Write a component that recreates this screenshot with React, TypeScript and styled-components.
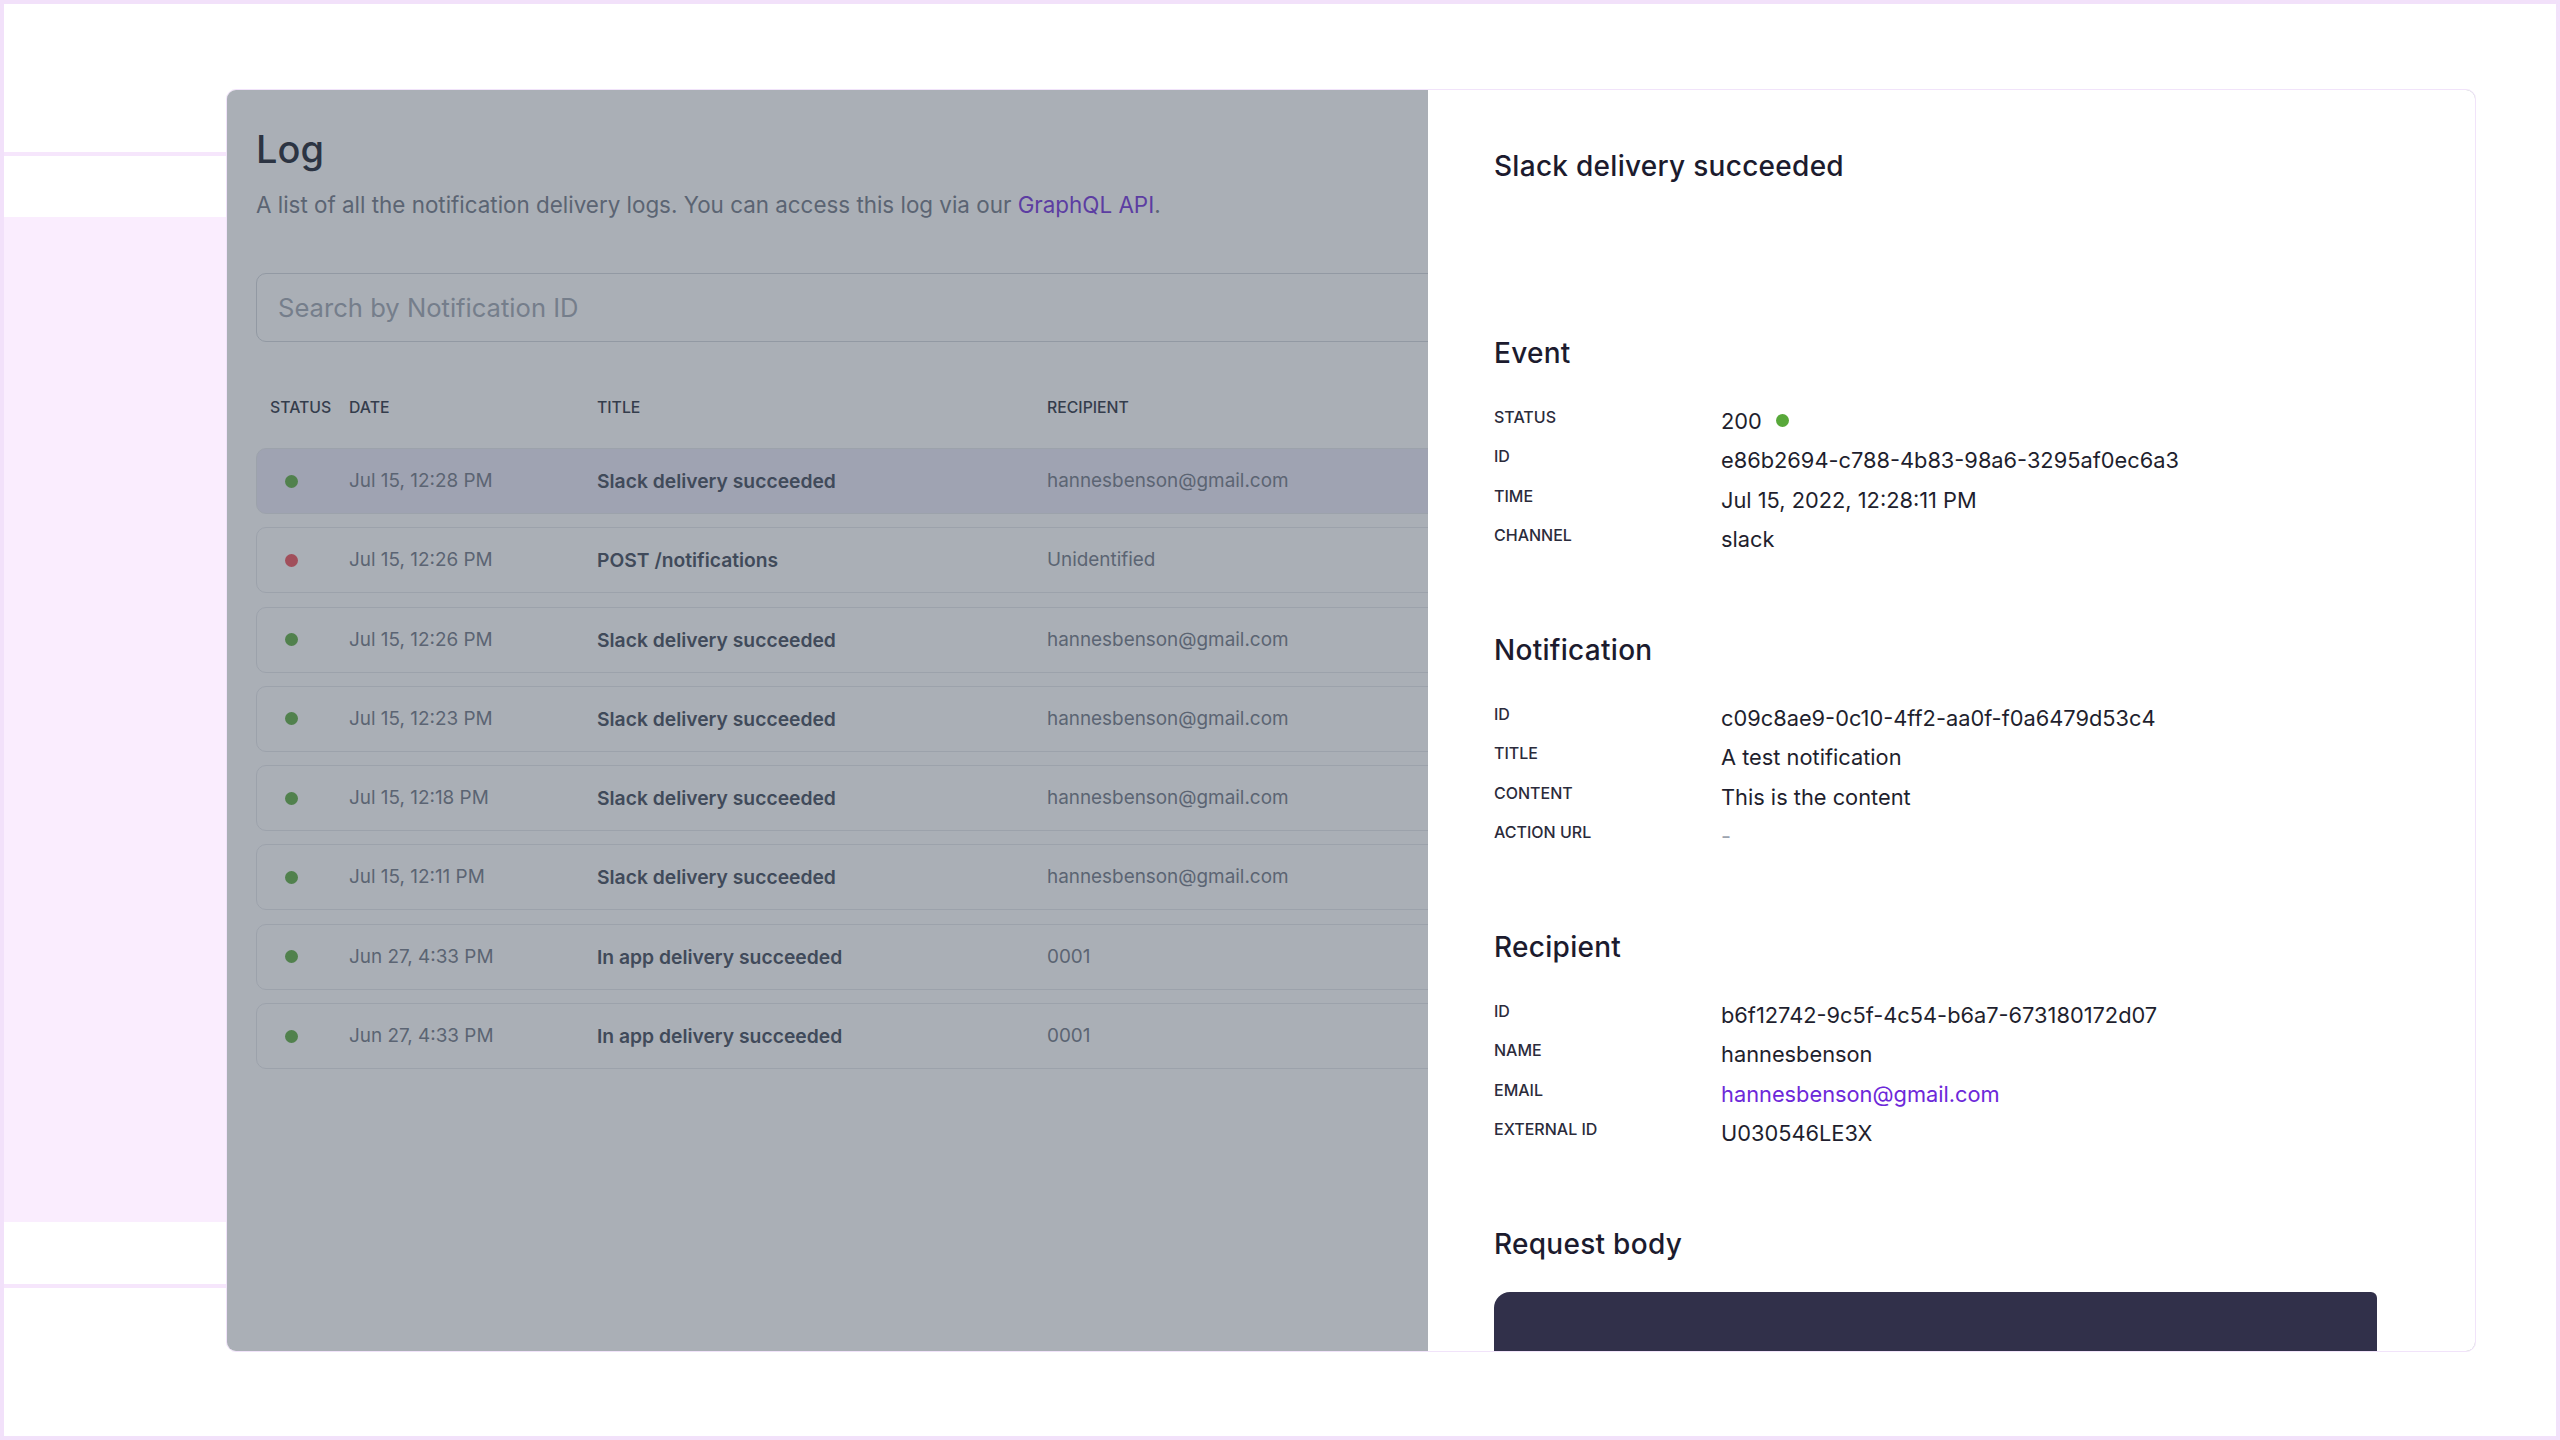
import React from 'react';
import styled, { createGlobalStyle } from 'styled-components';

const GlobalStyle = createGlobalStyle`
  html, body { margin: 0; padding: 0; background: #ffffff; }
  body { font-family: Inter, "Noto Sans", sans-serif; -webkit-font-smoothing: antialiased; }
  * { box-sizing: border-box; }
`;

const Frame = styled.div`
  width: 2560px;
  height: 1440px;
  border: 4px solid #f2e1fa;
  background: #ffffff;
  display: grid;
  grid-template-columns: 222px 1fr;
  overflow: hidden;
`;

const Rail = styled.div`
  background: linear-gradient(
    to bottom,
    #ffffff 0 148px,
    #f6e6fc 148px 152px,
    #ffffff 152px 213px,
    #faedfe 213px 1218px,
    #ffffff 1218px 1280px,
    #f6e6fc 1280px 1284px,
    #ffffff 1284px
  );
`;

const Stage = styled.div`
  padding: 85px 80px 84px 0;
  display: flex;
`;

const Card = styled.div`
  position: relative;
  flex: 1;
  border: 1px solid #f1e3fa;
  border-radius: 10px;
  overflow: hidden;
  background: #ffffff;
`;

const LogPage = styled.section`
  padding: 37px 30px 0 29px;
  display: flex;
  flex-direction: column;
`;

const PageTitle = styled.h1`
  margin: 0;
  font-size: 38px;
  line-height: 44px;
  font-weight: 500;
  color: #111827;
`;

const PageDesc = styled.p`
  margin: 18px 0 0;
  font-size: 22.4px;
  line-height: 32px;
  color: #6b7280;
`;

const Link = styled.a`
  color: #6d28d9;
  text-decoration: none;
`;

const SearchInput = styled.input`
  margin-top: 52px;
  width: 100%;
  height: 69px;
  border: 1px solid #d1d5db;
  border-radius: 10px;
  padding: 0 21px;
  font-family: Inter, "Noto Sans", sans-serif;
  font-size: 25.6px;
  color: #111827;
  background: #ffffff;
  outline: none;
  &::placeholder { color: #9ca3af; }
`;

const TableGrid = styled.div`
  display: grid;
  grid-template-columns: 92px 248px 450px 1fr;
  align-items: center;
`;

const TableHead = styled(TableGrid)`
  margin-top: 56px;
  padding-left: 1px;
  height: 20px;
`;

const HeadCell = styled.div<{ $indent?: number }>`
  padding-left: ${(p) => p.$indent ?? 0}px;
  font-size: 15.8px;
  line-height: 20px;
  font-weight: 500;
  text-transform: uppercase;
  color: #1f2937;
`;

const Rows = styled.div`
  margin-top: 30px;
  display: flex;
  flex-direction: column;
  gap: 13.3px;
`;

const Row = styled(TableGrid)<{ $selected?: boolean }>`
  height: 66px;
  border: 1px solid #e5e7eb;
  border-radius: 10px;
  background: ${(p) => (p.$selected ? '#ebe8f7' : '#ffffff')};
`;

const Dot = styled.span<{ $ok: boolean }>`
  display: inline-block;
  width: 13px;
  height: 13px;
  border-radius: 50%;
  background: ${(p) => (p.$ok ? '#58a83a' : '#ef4b54')};
`;

const DotCell = styled.div`
  padding-left: 28px;
  display: flex;
  align-items: center;
`;

const Cell = styled.div<{ $strong?: boolean }>`
  font-size: ${(p) => (p.$strong ? 19.3 : 18.9)}px;
  line-height: 24px;
  font-weight: ${(p) => (p.$strong ? 600 : 400)};
  color: ${(p) => (p.$strong ? '#374151' : '#6b7280')};
  white-space: nowrap;
`;

const Overlay = styled.div`
  position: absolute;
  inset: 0;
  background: rgba(75, 85, 99, 0.47);
`;

const Drawer = styled.aside`
  position: absolute;
  top: 0;
  right: 0;
  bottom: 0;
  width: 1047px;
  background: #ffffff;
  padding: 58px 98px 0 66px;
  display: flex;
  flex-direction: column;
  overflow: hidden;
`;

const DrawerTitle = styled.h2`
  margin: 0;
  font-size: 28px;
  line-height: 36px;
  font-weight: 500;
  color: #1c1b2e;
  letter-spacing: 0.01em;
`;

const Sections = styled.div`
  margin-top: 152.5px;
  display: flex;
  flex-direction: column;
  gap: 78.5px;
`;

const Section = styled.section`
  display: flex;
  flex-direction: column;
`;

const SectionTitle = styled.h3`
  margin: 0;
  font-size: 28px;
  line-height: 32px;
  font-weight: 500;
  color: #1c1b2e;
  letter-spacing: 0.01em;
`;

const DetailGrid = styled.dl`
  margin: 36px 0 0;
  display: grid;
  grid-template-columns: 227px 1fr;
  row-gap: 7.5px;
  align-items: start;
`;

const Label = styled.dt`
  margin: 0;
  font-size: 16px;
  line-height: 24px;
  font-weight: 500;
  text-transform: uppercase;
  color: #2b2b3b;
`;

const Value = styled.dd<{ $muted?: boolean }>`
  margin: 0;
  font-size: 21.8px;
  line-height: 32px;
  color: ${(p) => (p.$muted ? '#9ca3af' : '#1f1f2e')};
  display: flex;
  align-items: center;
  gap: 14px;
`;

const ValueLink = styled.a`
  color: #6d28d9;
  text-decoration: none;
`;

const CodeBlock = styled.pre`
  margin: 32px 0 0;
  height: 240px;
  background: #31304a;
  border-radius: 16px 6px 6px 16px;
  flex-shrink: 0;
`;

type LogRow = { ok: boolean; date: string; title: string; recipient: string };

const rows: LogRow[] = [
  { ok: true, date: 'Jul 15, 12:28 PM', title: 'Slack delivery succeeded', recipient: 'hannesbenson@gmail.com' },
  { ok: false, date: 'Jul 15, 12:26 PM', title: 'POST /notifications', recipient: 'Unidentified' },
  { ok: true, date: 'Jul 15, 12:26 PM', title: 'Slack delivery succeeded', recipient: 'hannesbenson@gmail.com' },
  { ok: true, date: 'Jul 15, 12:23 PM', title: 'Slack delivery succeeded', recipient: 'hannesbenson@gmail.com' },
  { ok: true, date: 'Jul 15, 12:18 PM', title: 'Slack delivery succeeded', recipient: 'hannesbenson@gmail.com' },
  { ok: true, date: 'Jul 15, 12:11 PM', title: 'Slack delivery succeeded', recipient: 'hannesbenson@gmail.com' },
  { ok: true, date: 'Jun 27, 4:33 PM', title: 'In app delivery succeeded', recipient: '0001' },
  { ok: true, date: 'Jun 27, 4:33 PM', title: 'In app delivery succeeded', recipient: '0001' },
];

type Detail = { label: string; value: React.ReactNode; muted?: boolean };

const eventDetails: Detail[] = [
  { label: 'Status', value: (<>200 <Dot $ok /></>) },
  { label: 'ID', value: 'e86b2694-c788-4b83-98a6-3295af0ec6a3' },
  { label: 'Time', value: 'Jul 15, 2022, 12:28:11 PM' },
  { label: 'Channel', value: 'slack' },
];

const notificationDetails: Detail[] = [
  { label: 'ID', value: 'c09c8ae9-0c10-4ff2-aa0f-f0a6479d53c4' },
  { label: 'Title', value: 'A test notification' },
  { label: 'Content', value: 'This is the content' },
  { label: 'Action URL', value: '-', muted: true },
];

const recipientDetails: Detail[] = [
  { label: 'ID', value: 'b6f12742-9c5f-4c54-b6a7-673180172d07' },
  { label: 'Name', value: 'hannesbenson' },
  { label: 'Email', value: <ValueLink href="#">hannesbenson@gmail.com</ValueLink> },
  { label: 'External ID', value: 'U030546LE3X' },
];

const DetailSection: React.FC<{ title: string; items: Detail[] }> = ({ title, items }) => (
  <Section>
    <SectionTitle>{title}</SectionTitle>
    <DetailGrid>
      {items.map((d) => (
        <React.Fragment key={d.label}>
          <Label>{d.label}</Label>
          <Value $muted={d.muted}>{d.value}</Value>
        </React.Fragment>
      ))}
    </DetailGrid>
  </Section>
);

export default function App() {
  return (
    <>
      <GlobalStyle />
      <Frame>
        <Rail />
        <Stage>
          <Card>
            <LogPage>
              <PageTitle>Log</PageTitle>
              <PageDesc>
                A list of all the notification delivery logs. You can access this log via our{' '}
                <Link href="#">GraphQL API</Link>.
              </PageDesc>
              <SearchInput placeholder="Search by Notification ID" />
              <TableHead>
                <HeadCell $indent={13}>Status</HeadCell>
                <HeadCell>Date</HeadCell>
                <HeadCell>Title</HeadCell>
                <HeadCell>Recipient</HeadCell>
              </TableHead>
              <Rows>
                {rows.map((r, i) => (
                  <Row key={i} $selected={i === 0}>
                    <DotCell>
                      <Dot $ok={r.ok} />
                    </DotCell>
                    <Cell>{r.date}</Cell>
                    <Cell $strong>{r.title}</Cell>
                    <Cell>{r.recipient}</Cell>
                  </Row>
                ))}
              </Rows>
            </LogPage>
            <Overlay />
            <Drawer>
              <DrawerTitle>Slack delivery succeeded</DrawerTitle>
              <Sections>
                <DetailSection title="Event" items={eventDetails} />
                <DetailSection title="Notification" items={notificationDetails} />
                <DetailSection title="Recipient" items={recipientDetails} />
                <Section>
                  <SectionTitle>Request body</SectionTitle>
                  <CodeBlock />
                </Section>
              </Sections>
            </Drawer>
          </Card>
        </Stage>
      </Frame>
    </>
  );
}
